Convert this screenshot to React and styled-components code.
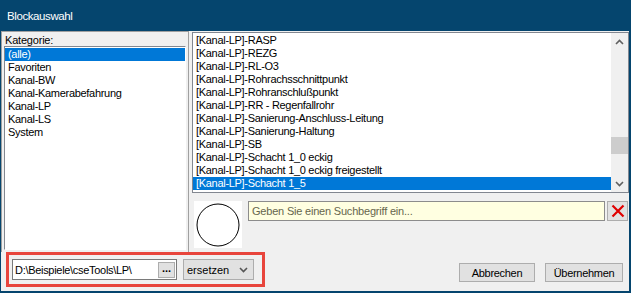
import styled, { createGlobalStyle } from "styled-components";

const GlobalStyle = createGlobalStyle`
  html, body {
    margin: 0;
    padding: 0;
    background: #f0f0f0;
  }
  * {
    box-sizing: border-box;
  }
`;

const categories = [
  "(alle)",
  "Favoriten",
  "Kanal-BW",
  "Kanal-Kamerabefahrung",
  "Kanal-LP",
  "Kanal-LS",
  "System",
];

const blocks = [
  "RASP",
  "REZG",
  "RL-O3",
  "Rohrachsschnittpunkt",
  "Rohranschlußpunkt",
  "RR - Regenfallrohr",
  "Sanierung-Anschluss-Leitung",
  "Sanierung-Haltung",
  "SB",
  "Schacht 1_0 eckig",
  "Schacht 1_0 eckig freigestellt",
  "Schacht 1_5",
];

const Window = styled.div`
  width: 631px;
  height: 293px;
  display: flex;
  flex-direction: column;
  font-family: "Liberation Sans", Arial, sans-serif;
  font-size: 11px;
  color: #000;
  overflow: hidden;
`;

const TitleBar = styled.div`
  height: 31px;
  flex-shrink: 0;
  background: #05456e;
  color: #fff;
  display: flex;
  align-items: center;
  padding-left: 7px;
  font-size: 11.5px;
  letter-spacing: -0.4px;
`;

const Frame = styled.div`
  flex: 1;
  display: flex;
  flex-direction: column;
  background: #f0f0f0;
  border-left: 1px solid #05456e;
  border-right: 2px solid #05456e;
  border-bottom: 2px solid #05456e;
`;

const TopRow = styled.div`
  height: 221px;
  display: flex;
  gap: 3px;
`;

const LeftPanel = styled.div`
  width: 188px;
  display: flex;
  flex-direction: column;
  border-top: 1px solid #a0a0a0;
  border-left: 1px solid #a0a0a0;
  border-right: 1px solid #a0a0a0;
  padding: 2px;
`;

const Label = styled.div`
  height: 12px;
  line-height: 12px;
  padding-left: 1px;
  letter-spacing: -0.2px;
`;

const ListBox = styled.div`
  flex: ${(p) => (p.$grow ? 1 : "none")};
  height: ${(p) => p.$height || "auto"};
  background: #fff;
  border: 1px solid ${(p) => (p.$light ? "#ffffff" : "#828790")};
  border-left-color: #828790;
  border-top-color: #828790;
  display: flex;
  overflow: hidden;
`;

const Items = styled.div`
  flex: 1;
  padding-top: 1px;
`;

const Item = styled.div`
  height: 13px;
  line-height: 13px;
  padding-left: 3px;
  letter-spacing: -0.3px;
  white-space: nowrap;
  background: ${(p) => (p.$selected ? "#0078d7" : "transparent")};
  color: ${(p) => (p.$selected ? "#fff" : "#000")};
`;

const RightColumn = styled.div`
  flex: 1;
  display: flex;
  flex-direction: column;
  padding-top: 1px;
`;

const ScrollBar = styled.div`
  width: 17px;
  background: #f0f0f0;
  display: flex;
  flex-direction: column;
  align-items: center;
`;

const ScrollArrow = styled.div`
  height: 17px;
  width: 17px;
  display: flex;
  align-items: center;
  justify-content: center;
`;

const ScrollTrack = styled.div`
  flex: 1;
  width: 100%;
  display: flex;
  flex-direction: column;
  justify-content: flex-end;
  padding-bottom: 21px;
`;

const ScrollThumb = styled.div`
  height: 17px;
  background: #cdcdcd;
`;

const PreviewRow = styled.div`
  display: flex;
  align-items: flex-start;
  margin-top: 8px;
  padding-left: 2px;
`;

const Preview = styled.div`
  width: 48px;
  height: 47px;
  background: #fff;
  display: flex;
  align-items: center;
  justify-content: center;
`;

const SearchBox = styled.div`
  flex: 1;
  height: 20px;
  margin-left: 6px;
  background: #ffffe1;
  border: 1px solid #8c8c8c;
  color: #66664d;
  display: flex;
  align-items: center;
  padding-left: 3px;
  letter-spacing: -0.2px;
`;

const IconButton = styled.div`
  width: 21px;
  height: 20px;
  margin-left: 2px;
  margin-right: 1px;
  background: #e1e1e1;
  border: 1px solid #adadad;
  display: flex;
  align-items: center;
  justify-content: center;
`;

const BottomRow = styled.div`
  flex: 1;
  display: flex;
  align-items: flex-start;
`;

const Annotated = styled.div`
  margin-left: 5px;
  width: 259px;
  height: 35px;
  border: 3px solid #e8453c;
  display: flex;
  align-items: flex-start;
  gap: 6px;
  padding: 4px 0 0 3px;
`;

const PathField = styled.div`
  width: 165px;
  height: 21px;
  background: #fff;
  border: 1px solid #7a7a7a;
  display: flex;
  align-items: center;
  justify-content: space-between;
  padding: 0 1px 0 2px;
  letter-spacing: -0.3px;
`;

const DotsButton = styled.div`
  width: 17px;
  height: 16px;
  background: #e1e1e1;
  border: 1px solid #adadad;
  font-weight: bold;
  font-size: 11px;
  line-height: 10px;
  text-align: center;
  letter-spacing: 0;
`;

const Dropdown = styled.div`
  width: 71px;
  height: 21px;
  background: #e1e1e1;
  border: 1px solid #adadad;
  display: flex;
  align-items: center;
  justify-content: space-between;
  padding: 0 5px 0 3px;
`;

const Buttons = styled.div`
  margin-left: auto;
  margin-right: 6px;
  margin-top: 11px;
  display: flex;
  gap: 10px;
`;

const Button = styled.div`
  width: ${(p) => p.$width}px;
  height: 19px;
  background: #e1e1e1;
  border: 1px solid #adadad;
  display: flex;
  align-items: center;
  justify-content: center;
  letter-spacing: -0.3px;
`;

const Chevron = ({ up, color = "#606060" }) => (
  <svg width="9" height="6" viewBox="0 0 9 6">
    <path
      d={up ? "M1 5 L4.5 1.5 L8 5" : "M1 1 L4.5 4.5 L8 1"}
      stroke={color}
      strokeWidth="1.6"
      fill="none"
    />
  </svg>
);

export default function App() {
  return (
    <>
      <GlobalStyle />
      <Window>
        <TitleBar>Blockauswahl</TitleBar>
        <Frame>
          <TopRow>
            <LeftPanel>
              <Label>Kategorie:</Label>
              <ListBox $grow $light>
                <Items>
                  {categories.map((c, i) => (
                    <Item key={c} $selected={i === 0}>
                      {c}
                    </Item>
                  ))}
                </Items>
              </ListBox>
            </LeftPanel>
            <RightColumn>
              <ListBox $height="161px">
                <Items>
                  {blocks.map((b, i) => (
                    <Item key={b} $selected={i === blocks.length - 1}>
                      [Kanal-LP]-{b}
                    </Item>
                  ))}
                </Items>
                <ScrollBar>
                  <ScrollArrow>
                    <Chevron up />
                  </ScrollArrow>
                  <ScrollTrack>
                    <ScrollThumb />
                  </ScrollTrack>
                  <ScrollArrow>
                    <Chevron />
                  </ScrollArrow>
                </ScrollBar>
              </ListBox>
              <PreviewRow>
                <Preview>
                  <svg width="44" height="44" viewBox="0 0 44 44">
                    <circle cx="22" cy="22" r="21" stroke="#000" strokeWidth="1" fill="#fff" />
                  </svg>
                </Preview>
                <SearchBox>Geben Sie einen Suchbegriff ein...</SearchBox>
                <IconButton>
                  <svg width="14" height="14" viewBox="0 0 14 14">
                    <path d="M1.5 1.5 L12.5 12.5 M12.5 1.5 L1.5 12.5" stroke="#e00000" strokeWidth="2.2" />
                  </svg>
                </IconButton>
              </PreviewRow>
            </RightColumn>
          </TopRow>
          <BottomRow>
            <Annotated>
              <PathField>
                <span>D:\Beispiele\cseTools\LP\</span>
                <DotsButton>...</DotsButton>
              </PathField>
              <Dropdown>
                <span>ersetzen</span>
                <Chevron color="#555" />
              </Dropdown>
            </Annotated>
            <Buttons>
              <Button $width={76}>Abbrechen</Button>
              <Button $width={78}>Übernehmen</Button>
            </Buttons>
          </BottomRow>
        </Frame>
      </Window>
    </>
  );
}
